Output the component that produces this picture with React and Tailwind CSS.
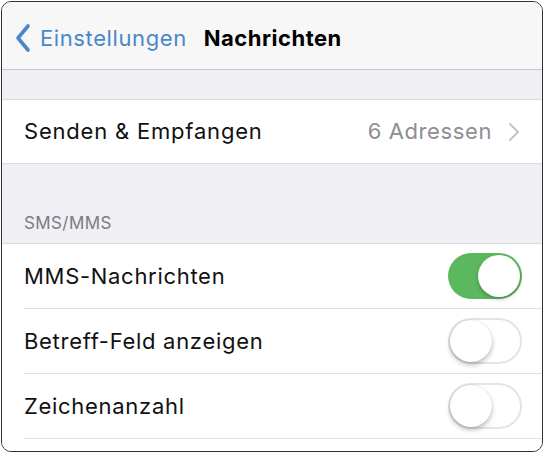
export default function App() {
  const font = { fontFamily: 'Inter, "Liberation Sans", sans-serif' };
  const Toggle = ({ on }) =>
    on ? (
      <div className="w-[74px] h-[46px] rounded-full bg-[#5cb85f] relative">
        <div className="absolute right-[2px] top-[2px] w-[42px] h-[42px] rounded-full bg-white shadow-[0_2px_4px_rgba(0,0,0,0.25)]" />
      </div>
    ) : (
      <div className="w-[74px] h-[46px] rounded-full border-2 border-[#e4e4e6] bg-white relative">
        <div className="absolute left-0 top-0 w-[42px] h-[42px] rounded-full bg-white shadow-[0_3px_5px_rgba(0,0,0,0.25),0_0_1px_rgba(0,0,0,0.2)]" />
      </div>
    );
  return (
    <div className="w-[544px] h-[454px] bg-white" style={font}>
      <div className="ml-[1px] mt-[1px] w-[542px] h-[451px] border border-[#333] rounded-[10px] overflow-hidden bg-[#efeff4] flex flex-col">
        <div className="h-[68px] pt-[5px] bg-[#f7f7f8] border-b border-[#c8c8cc] flex items-center shrink-0">
          <svg width="18" height="30" viewBox="0 0 18 30" className="ml-[12px]">
            <path d="M14 3 L4 15 L14 27" fill="none" stroke="#4a87c9" strokeWidth="3.6" strokeLinecap="round" strokeLinejoin="round" />
          </svg>
          <span className="ml-[8px] text-[22px] text-[#4a87c9] tracking-[0.6px]">Einstellungen</span>
          <span className="ml-[17px] text-[22px] font-bold text-black tracking-[0.5px]">Nachrichten</span>
        </div>
        <div className="h-[29px] shrink-0" />
        <div className="h-[65px] bg-white border-y border-[#dcdce0] flex items-center pl-[22px] pr-[22px] shrink-0">
          <span className="text-[22px] text-[#111] flex-1 tracking-[0.8px]">Senden &amp; Empfangen</span>
          <span className="text-[22px] text-[#8e8e93] tracking-[0.6px]">6 Adressen</span>
          <svg width="12" height="20" viewBox="0 0 12 20" className="ml-[16px]">
            <path d="M2 2 L10 10 L2 18" fill="none" stroke="#c4c4c8" strokeWidth="2" strokeLinecap="round" strokeLinejoin="round" />
          </svg>
        </div>
        <div className="h-[79px] flex items-end pl-[22px] pb-[7px] shrink-0">
          <span className="text-[17px] text-[#7c7c82] tracking-[0.4px]">SMS/MMS</span>
        </div>
        <div className="flex-1 bg-white border-t border-[#dcdce0]">
          {[
            ["MMS-Nachrichten", true],
            ["Betreff-Feld anzeigen", false],
            ["Zeichenanzahl", false],
          ].map(([label, on]) => (
            <div key={label} className="ml-[22px] h-[65px] border-b border-[#e0e0e4] flex items-center pr-[20px]">
              <span className="flex-1 text-[22px] text-[#111] tracking-[0.7px]">{label}</span>
              <Toggle on={on} />
            </div>
          ))}
        </div>
      </div>
    </div>
  );
}
